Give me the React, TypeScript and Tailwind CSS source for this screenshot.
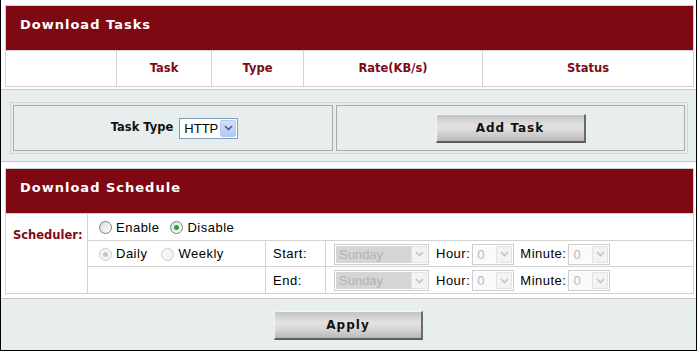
import React from "react";

function Chevron({ color }: { color: string }) {
  return (
    <svg width="9" height="6" viewBox="0 0 9 6">
      <path d="M1 1 L4.5 4.5 L8 1" fill="none" stroke={color} strokeWidth="1.6" />
    </svg>
  );
}

function DisSelect({ text, wide }: { text: string; wide?: boolean }) {
  return (
    <div
      className={`flex h-[21px] border border-[#cdcdcd] bg-white p-[1px] ${wide ? "w-[95px]" : "w-[42px]"}`}
    >
      <div
        className={`flex-1 pl-[3px] leading-[17px] text-[13px] ${wide ? "bg-[#d5d5d5] text-[#b2b2b2]" : "bg-[#fafafa] text-[#b8b8b8]"}`}
      >
        {text}
      </div>
      <div className="w-[16px] flex items-center justify-center bg-[#f3f3f3] border border-[#e2e2e2]">
        <Chevron color="#c2c2c2" />
      </div>
    </div>
  );
}

function Radio({ checked, disabled }: { checked?: boolean; disabled?: boolean }) {
  return (
    <span
      className={`inline-flex w-[13px] h-[13px] shrink-0 rounded-full border items-center justify-center ${
        disabled
          ? "border-[#cbcbcb] bg-[#f5f5f5]"
          : "border-[#6f7f90] bg-[linear-gradient(135deg,#dcdcd6,#ffffff)]"
      }`}
    >
      {checked && (
        <span
          className={`w-[5px] h-[5px] rounded-full ${disabled ? "bg-[#c6c6c6]" : "bg-[#24a324]"}`}
        />
      )}
    </span>
  );
}

function Btn({ label, w }: { label: string; w: string }) {
  return (
    <div
      className={`${w} h-[29px] flex items-center justify-center border-t border-l border-t-[#f4f4f4] border-l-[#f4f4f4] border-b-2 border-r-2 border-b-[#5e5e5e] border-r-[#6a6a6a] bg-[linear-gradient(180deg,#c4c4c4,#e2e2e2_40%,#dadada_60%,#b9b9b9)] font-['DejaVu_Sans',Verdana,sans-serif] font-bold text-[12px] tracking-[1px] text-[#111]`}
    >
      {label}
    </div>
  );
}

export default function App() {
  const headCell =
    "border-l border-[#d2d2d2] flex items-center justify-center font-['DejaVu_Sans',Verdana,sans-serif] font-bold text-[11.5px] text-[#7d0a18]";
  const normal = "font-['Liberation_Sans',Arial,sans-serif] text-[13px] tracking-[0.5px] text-black";
  return (
    <div className="w-[697px] h-[351px] bg-white border-l border-r border-b border-black flex flex-col overflow-hidden font-['Liberation_Sans',Arial,sans-serif]">
      {/* Download Tasks */}
      <div className="ml-[4px] mt-[5px] w-[689px] border border-[#d2d2d2]">
        <div className="h-[45px] bg-[#7f0913] border-b border-[#d2d2d2] pl-[14px] pt-[11px] leading-[16px] font-['DejaVu_Sans',Verdana,sans-serif] font-bold text-[13px] tracking-[1px] text-white">
          Download Tasks
        </div>
        <div className="grid grid-cols-[110px_95px_92px_179px_1fr] h-[35px]">
          <div />
          <div className={headCell}>Task</div>
          <div className={headCell}>Type</div>
          <div className={headCell}>Rate(KB/s)</div>
          <div className={headCell}>Status</div>
        </div>
      </div>

      {/* Task type / Add task */}
      <div className="mt-[2px] border-t border-b border-[#c8c8c0] bg-[#e8eeee] pt-[12px] pb-[7px] pl-[9px]">
        <div className="w-[678px] border border-[#d4d4cc] p-[2px] flex gap-[3px]">
          <div className="w-[320px] h-[46px] border border-[#a9a9a9] flex items-center justify-center gap-[6px] pl-[3px]">
            <span className="font-['DejaVu_Sans',Verdana,sans-serif] font-bold text-[11.5px] text-[#111]">
              Task Type
            </span>
            <div className="w-[59px] h-[21px] border border-[#7f9db9] bg-white flex p-[1px]">
              <div className="flex-1 pl-[3px] leading-[17px] text-[13px] text-black">HTTP</div>
              <div className="w-[16px] rounded-[2px] border border-[#b6c9f3] bg-[linear-gradient(180deg,#d3e0fd,#b4c8f6)] flex items-center justify-center">
                <Chevron color="#4d6185" />
              </div>
            </div>
          </div>
          <div className="flex-1 h-[46px] border border-[#a9a9a9] flex items-center justify-center">
            <Btn label="Add Task" w="w-[150px]" />
          </div>
        </div>
      </div>

      {/* Download Schedule */}
      <div className="ml-[4px] mt-[6px] w-[689px] border border-[#d2d2d2]">
        <div className="h-[45px] bg-[#7f0913] border-b border-[#d2d2d2] pl-[14px] pt-[11px] leading-[16px] font-['DejaVu_Sans',Verdana,sans-serif] font-bold text-[13px] tracking-[1px] text-white">
          Download Schedule
        </div>
        <div className="grid grid-cols-[81px_178px_60px_1fr] grid-rows-[27px_26px_26px]">
          <div className="row-span-3 pl-[7px] pt-[14px] leading-[14px] font-['DejaVu_Sans',Verdana,sans-serif] font-bold text-[11.5px] text-[#7d0a18]">
            Scheduler:
          </div>
          <div className="col-span-3 border-l border-b border-[#d2d2d2] flex items-center pl-[11px] pt-[1px]">
            <Radio />
            <span className={`${normal} ml-[4px]`}>Enable</span>
            <span className="ml-[11px] inline-flex">
              <Radio checked />
            </span>
            <span className={`${normal} ml-[4px]`}>Disable</span>
          </div>

          <div className="border-l border-b border-[#d2d2d2] flex items-center pl-[11px] pt-[1px]">
            <Radio checked disabled />
            <span className={`${normal} ml-[4px]`}>Daily</span>
            <span className="ml-[14px] inline-flex">
              <Radio disabled />
            </span>
            <span className={`${normal} ml-[4px]`}>Weekly</span>
          </div>
          <div className={`border-l border-b border-[#d2d2d2] flex items-center pl-[7px] pt-[1px] ${normal}`}>Start:</div>
          <div className="border-l border-b border-[#d2d2d2] flex items-center pl-[8px] pt-[1px]">
            <DisSelect text="Sunday" wide />
            <span className={`${normal} ml-[7px] mr-[2px]`}>Hour:</span>
            <DisSelect text="0" />
            <span className={`${normal} ml-[6px] mr-[2px]`}>Minute:</span>
            <DisSelect text="0" />
          </div>

          <div className="border-l border-[#d2d2d2]" />
          <div className={`border-l border-[#d2d2d2] flex items-center pl-[7px] pt-[1px] ${normal}`}>End:</div>
          <div className="border-l border-[#d2d2d2] flex items-center pl-[8px] pt-[1px]">
            <DisSelect text="Sunday" wide />
            <span className={`${normal} ml-[7px] mr-[2px]`}>Hour:</span>
            <DisSelect text="0" />
            <span className={`${normal} ml-[6px] mr-[2px]`}>Minute:</span>
            <DisSelect text="0" />
          </div>
        </div>
      </div>

      {/* Footer */}
      <div className="mt-[4px] flex-1 border-t border-[#c8c8c0] bg-[#e8eeee] flex items-center justify-center pt-[2px]">
        <Btn label="Apply" w="w-[149px]" />
      </div>
    </div>
  );
}
